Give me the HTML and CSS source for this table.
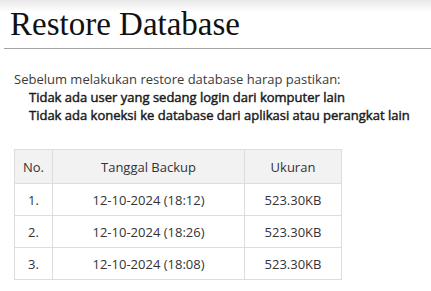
FILE: index.html
```html
<!DOCTYPE html>
<html>
<head>
<meta charset="utf-8">
<link rel="stylesheet" href="styles.css">
</head>
<body>
<div class="page">
  <header class="header">
    <h1 class="title">Restore Database</h1>
  </header>
  <section class="notes">
    <p class="intro">Sebelum melakukan restore database harap pastikan:</p>
    <p class="rule">Tidak ada user yang sedang login dari komputer lain</p>
    <p class="rule">Tidak ada koneksi ke database dari aplikasi atau perangkat lain</p>
  </section>
  <table class="backups">
    <colgroup>
      <col class="c-no">
      <col class="c-date">
      <col class="c-size">
    </colgroup>
    <thead>
      <tr><th>No.</th><th>Tanggal Backup</th><th>Ukuran</th></tr>
    </thead>
    <tbody>
      <tr><td>1.</td><td>12-10-2024 (18:12)</td><td>523.30KB</td></tr>
      <tr><td>2.</td><td>12-10-2024 (18:26)</td><td>523.30KB</td></tr>
      <tr><td>3.</td><td>12-10-2024 (18:08)</td><td>523.30KB</td></tr>
    </tbody>
  </table>
</div>
</body>
</html>
```
FILE: styles.css
```css
html, body {
  margin: 0;
  padding: 0;
  background: #ffffff;
}
body {
  font-family: "Open Sans", "Liberation Sans", sans-serif;
  font-size: 13px;
  color: #333333;
}
.page {
  background: linear-gradient(to bottom, #e9e9e9 0px, #ffffff 12px);
}
.header {
  margin-left: 4px;
  padding: 4px 0 0 6px;
  height: 44px;
  border-bottom: 1px solid #a3a3a3;
}
.title {
  margin: 0;
  font-family: "Liberation Serif", serif;
  font-weight: normal;
  font-size: 33px;
  line-height: 40px;
  color: #111111;
}
.notes {
  padding: 21px 0 0 14px;
}
.notes p {
  margin: 0;
  line-height: 18px;
}
.intro {
  color: #3a3a3a;
}
.rule {
  padding-left: 15px;
  font-weight: 400;
  color: #1a1a1a;
  -webkit-text-stroke: 0.45px #1a1a1a;
}
.backups {
  margin: 25px 0 0 14px;
  border-collapse: collapse;
  table-layout: fixed;
  width: 327px;
}
.c-no { width: 38px; }
.c-date { width: 192px; }
.c-size { width: 97px; }
.backups th,
.backups td {
  border: 1px solid #dddddd;
  text-align: center;
  padding: 0;
  font-weight: normal;
  color: #333333;
}
.backups th {
  height: 33px;
  background: #f2f2f2;
}
.backups td {
  height: 31px;
}
```
